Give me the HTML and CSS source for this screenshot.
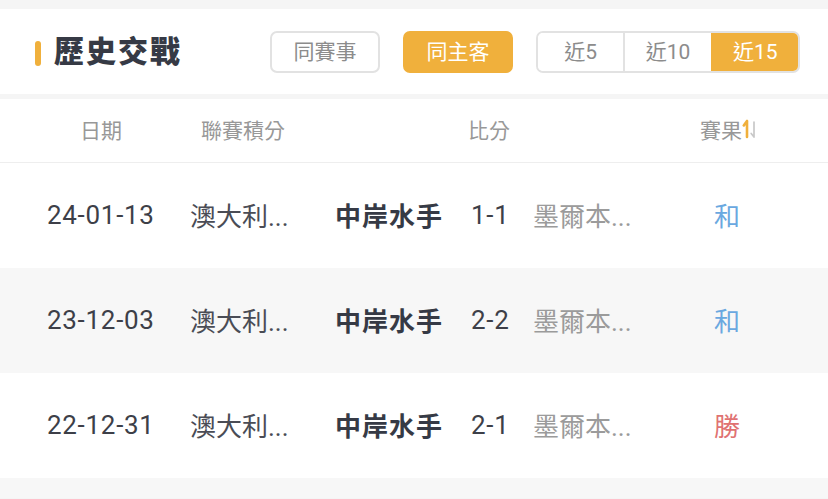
FILE: index.html
```html
<!DOCTYPE html>
<html lang="zh-Hant">
  <head>
    <meta charset="UTF-8" />
    <meta name="viewport" content="width=device-width, initial-scale=1.0" />
    <title>歷史交戰</title>
    <link rel="stylesheet" href="styles.css">
  </head>
  <body>
    <div class="history">
      <div class="history-head">
        <h2 class="title">歷史交戰</h2>
        <button class="tab">同賽事</button>
        <button class="tab active">同主客</button>
        <div class="segment">
          <button class="seg">近5</button>
          <button class="seg">近10</button>
          <button class="seg active">近15</button>
        </div>
      </div>

      <div class="table">
        <div class="table-head">
          <span>日期</span>
          <span>聯賽積分</span>
          <span>比分</span>
          <span class="sort">賽果<svg width="18" height="22" viewBox="0 0 18 22">
              <path d="M5 3v16M5 3L1.8 7.5" stroke="#f0b03c" stroke-width="2.6" fill="none" stroke-linecap="round" />
              <path d="M12 4v15M12 19l-2.8-3.5" stroke="#c8c8c8" stroke-width="1.7" fill="none" stroke-linecap="round" />
            </svg></span>
        </div>

        <div class="row">
          <span class="date">24-01-13</span>
          <span class="league">澳大利...</span>
          <span class="home">中岸水手</span>
          <span class="score">1-1</span>
          <span class="away">墨爾本...</span>
          <span class="result draw">和</span>
        </div>
        <div class="row">
          <span class="date">23-12-03</span>
          <span class="league">澳大利...</span>
          <span class="home">中岸水手</span>
          <span class="score">2-2</span>
          <span class="away">墨爾本...</span>
          <span class="result draw">和</span>
        </div>
        <div class="row">
          <span class="date">22-12-31</span>
          <span class="league">澳大利...</span>
          <span class="home">中岸水手</span>
          <span class="score">2-1</span>
          <span class="away">墨爾本...</span>
          <span class="result win">勝</span>
        </div>
        <div class="row"></div>
      </div>
    </div>
  </body>
</html>
```

FILE: styles.css
```css
body {
  margin: 0;
  background-color: #f5f5f5;
  font-family: Roboto, "Noto Sans CJK TC", sans-serif;
  color: #3d3f48;
}

.history {
  padding-top: 9px;
}

.history-head {
  display: flex;
  align-items: center;
  height: 85px;
  padding-left: 35px;
  background-color: #fff;
  margin-bottom: 5px;
}

.title {
  margin: 0 88px 0 0;
  padding-left: 19px;
  position: relative;
  font-size: 30px;
  font-weight: 900;
  color: #363a45;
  letter-spacing: 2px;
  line-height: 40px;
}

.title::before {
  content: "";
  position: absolute;
  left: 0;
  top: 9px;
  width: 6px;
  height: 25px;
  border-radius: 3px;
  background-color: #f0b03c;
}

.tab {
  width: 110px;
  height: 42px;
  margin-right: 23px;
  border: 2px solid #e2e2e2;
  border-radius: 7px;
  background-color: #fff;
  color: #8c8c8c;
  font-family: inherit;
  font-size: 21px;
  padding: 0 0 4px;
}

.tab.active {
  border-color: #f0b03c;
  background-color: #f0b03c;
  color: #fff;
}

.segment {
  display: flex;
  width: 264px;
  height: 42px;
  border: 2px solid #e2e2e2;
  border-radius: 7px;
  overflow: hidden;
  box-sizing: border-box;
}

.seg {
  flex: 1;
  border: none;
  border-left: 2px solid #e2e2e2;
  background-color: #fff;
  color: #8c8c8c;
  font-family: inherit;
  font-size: 21px;
  padding: 0 0 4px;
}

.seg:first-child {
  border-left: none;
}

.seg.active {
  background-color: #f0b03c;
  border-left-color: #f0b03c;
  color: #fff;
}

.table {
  background-color: #fff;
}

.table-head {
  display: grid;
  grid-template-columns: 142px 142px 350px 106px;
  padding-left: 30px;
  height: 63px;
  align-items: center;
  border-bottom: 1px solid #eeeeee;
  color: #989898;
  font-size: 21px;
}

.table-head span {
  text-align: center;
  padding-bottom: 3px;
}

.sort {
  display: flex;
  justify-content: center;
  align-items: center;
  padding-left: 26px;
}

.row {
  display: grid;
  grid-template-columns: 143px 145px 136px 62px 130px 128px;
  padding-left: 47px;
  height: 105px;
  align-items: center;
  font-size: 26px;
}

.row:nth-child(odd) {
  background-color: #f7f7f7;
}

.row:last-child {
  height: 20px;
}

.row span {
  padding-bottom: 2px;
}

.date,
.score {
  color: #3d3f48;
  letter-spacing: 0.7px;
}

.league {
  color: #4a4c55;
}

.home {
  font-weight: bold;
  color: #363a45;
  letter-spacing: 1px;
}

.away {
  color: #9b9b9b;
}

.result {
  text-align: center;
}

.draw {
  color: #6aa8e0;
}

.win {
  color: #e07272;
}
```
